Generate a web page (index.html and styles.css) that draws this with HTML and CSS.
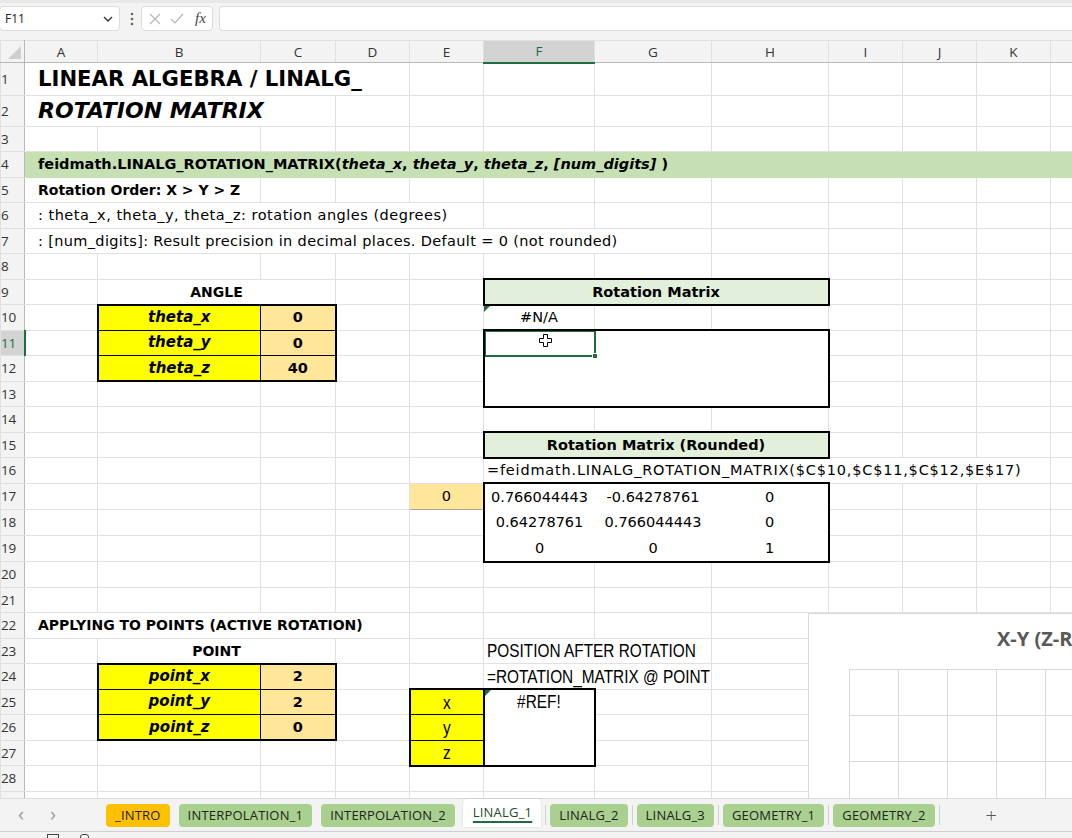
FILE: index.html
```html
<!DOCTYPE html>
<html lang="en">
<head>
  <meta charset="UTF-8" />
  <title>LINALG_1</title>
  <link rel="stylesheet" href="styles.css">
</head>
<body>
  <div class="app">
    <!-- name box + formula bar -->
    <div class="formula-bar">
      <div class="name-box">
        <span>F11</span>
        <svg width="10" height="6" viewBox="0 0 10 6"><path d="M1 1 L5 5 L9 1" fill="none" stroke="#333" stroke-width="1.4"/></svg>
      </div>
      <svg class="grip" width="4" height="14" viewBox="0 0 4 14"><circle cx="2" cy="2" r="1.3"/><circle cx="2" cy="7" r="1.3"/><circle cx="2" cy="12" r="1.3"/></svg>
      <div class="fx-box">
        <svg width="12" height="12" viewBox="0 0 12 12"><path d="M1 1 L11 11 M11 1 L1 11" stroke="#b5b5b5" stroke-width="1.2"/></svg>
        <svg width="14" height="11" viewBox="0 0 14 11"><path d="M1 6 L5 10 L13 1" fill="none" stroke="#b5b5b5" stroke-width="1.2"/></svg>
        <span class="fx">fx</span>
      </div>
      <div class="formula-input"></div>
    </div>

    <div class="sheet-wrap">
      <table class="sheet">
        <colgroup>
          <col class="c-rh"><col class="c-a"><col class="c-b"><col class="c-c"><col class="c-d"><col class="c-e">
          <col class="c-f"><col class="c-g"><col class="c-h"><col class="c-i"><col class="c-j"><col class="c-k"><col class="c-l">
        </colgroup>
        <thead>
          <tr>
            <th class="corner"><span class="corner-tri"></span></th>
            <th>A</th><th>B</th><th>C</th><th>D</th><th>E</th><th class="sel-col">F</th><th>G</th><th>H</th><th>I</th><th>J</th><th>K</th><th></th>
          </tr>
        </thead>
        <tbody>
          <tr class="r-title">
            <th>1</th>
            <td colspan="4" class="title">LINEAR ALGEBRA / LINALG_</td>
            <td></td><td></td><td></td><td></td><td></td><td></td><td></td><td></td>
          </tr>
          <tr class="r-sub">
            <th>2</th>
            <td colspan="3" class="title italic">ROTATION MATRIX</td>
            <td></td><td></td><td></td><td></td><td></td><td></td><td></td><td></td><td></td>
          </tr>
          <tr><th>3</th><td></td><td></td><td></td><td></td><td></td><td></td><td></td><td></td><td></td><td></td><td></td><td></td></tr>
          <tr>
            <th>4</th>
            <td colspan="12" class="fn-band">feidmath.LINALG_ROTATION_MATRIX(<i>theta_x</i>, <i>theta_y</i>, <i>theta_z</i>, <i>[num_digits]</i> )</td>
          </tr>
          <tr>
            <th>5</th>
            <td colspan="2" class="txt bold">Rotation Order: X &gt; Y &gt; Z</td>
            <td></td><td></td><td></td><td></td><td></td><td></td><td></td><td></td><td></td><td></td>
          </tr>
          <tr>
            <th>6</th>
            <td colspan="5" class="txt note">: theta_x, theta_y, theta_z: rotation angles (degrees)</td>
            <td></td><td></td><td></td><td></td><td></td><td></td><td></td>
          </tr>
          <tr>
            <th>7</th>
            <td colspan="7" class="txt note tight">: [num_digits]: Result precision in decimal places. Default = 0 (not rounded)</td>
            <td></td><td></td><td></td><td></td><td></td>
          </tr>
          <tr><th>8</th><td></td><td></td><td></td><td></td><td></td><td></td><td></td><td></td><td></td><td></td><td></td><td></td></tr>
          <tr>
            <th>9</th>
            <td></td>
            <td colspan="2" class="center bold">ANGLE</td>
            <td></td><td></td>
            <td colspan="3" class="box-head">Rotation Matrix</td>
            <td></td><td></td><td></td><td></td>
          </tr>
          <tr>
            <th>10</th>
            <td></td>
            <td class="key top left">theta_x</td>
            <td class="val top right">0</td>
            <td></td><td></td>
            <td class="center flag">#N/A</td>
            <td></td><td></td><td></td><td></td><td></td><td></td>
          </tr>
          <tr>
            <th class="sel-row">11</th>
            <td></td>
            <td class="key left">theta_y</td>
            <td class="val right">0</td>
            <td></td><td></td>
            <td colspan="3" rowspan="3" class="box">
              <div class="active-cell">
                <svg class="cursor" width="15" height="15" viewBox="0 0 15 15"><path d="M5.5 1.5 H9.5 V5.5 H13.5 V9.5 H9.5 V13.5 H5.5 V9.5 H1.5 V5.5 H5.5 Z" fill="#fff" stroke="#000" stroke-width="1"/></svg>
                <span class="fill-handle"></span>
              </div>
            </td>
            <td></td><td></td><td></td><td></td>
          </tr>
          <tr>
            <th>12</th>
            <td></td>
            <td class="key left bottom">theta_z</td>
            <td class="val right bottom">40</td>
            <td></td><td></td>
            <td></td><td></td><td></td><td></td>
          </tr>
          <tr><th>13</th><td></td><td></td><td></td><td></td><td></td><td></td><td></td><td></td><td></td></tr>
          <tr><th>14</th><td></td><td></td><td></td><td></td><td></td><td></td><td></td><td></td><td></td><td></td><td></td><td></td></tr>
          <tr>
            <th>15</th>
            <td></td><td></td><td></td><td></td><td></td>
            <td colspan="3" class="box-head">Rotation Matrix (Rounded)</td>
            <td></td><td></td><td></td><td></td>
          </tr>
          <tr>
            <th>16</th>
            <td></td><td></td><td></td><td></td><td></td>
            <td colspan="6" class="txt formula">=feidmath.LINALG_ROTATION_MATRIX($C$10,$C$11,$C$12,$E$17)</td>
            <td></td>
          </tr>
          <tr>
            <th>17</th>
            <td></td><td></td><td></td><td></td>
            <td class="digits">0</td>
            <td colspan="3" rowspan="3" class="box">
              <div class="matrix">
                <span>0.766044443</span><span>-0.64278761</span><span>0</span>
                <span>0.64278761</span><span>0.766044443</span><span>0</span>
                <span>0</span><span>0</span><span>1</span>
              </div>
            </td>
            <td></td><td></td><td></td><td></td>
          </tr>
          <tr><th>18</th><td></td><td></td><td></td><td></td><td></td><td></td><td></td><td></td><td></td></tr>
          <tr><th>19</th><td></td><td></td><td></td><td></td><td></td><td></td><td></td><td></td><td></td></tr>
          <tr><th>20</th><td></td><td></td><td></td><td></td><td></td><td></td><td></td><td></td><td></td><td></td><td></td><td></td></tr>
          <tr><th>21</th><td></td><td></td><td></td><td></td><td></td><td></td><td></td><td></td><td></td><td></td><td></td><td></td></tr>
          <tr>
            <th>22</th>
            <td colspan="4" class="txt bold">APPLYING TO POINTS (ACTIVE ROTATION)</td>
            <td></td><td></td><td></td><td></td><td></td><td></td><td></td><td></td>
          </tr>
          <tr>
            <th>23</th>
            <td></td>
            <td colspan="2" class="center bold">POINT</td>
            <td></td><td></td>
            <td colspan="2" class="narrow"><span>POSITION AFTER ROTATION</span></td>
            <td></td><td></td><td></td><td></td><td></td>
          </tr>
          <tr>
            <th>24</th>
            <td></td>
            <td class="key top left">point_x</td>
            <td class="val top right">2</td>
            <td></td><td></td>
            <td colspan="2" class="narrow"><span>=ROTATION_MATRIX @ POINT</span></td>
            <td></td><td></td><td></td><td></td><td></td>
          </tr>
          <tr>
            <th>25</th>
            <td></td>
            <td class="key left">point_y</td>
            <td class="val right">2</td>
            <td></td>
            <td class="axis top left"><span>x</span></td>
            <td rowspan="3" class="box result flag"><span>#REF!</span></td>
            <td></td><td></td><td></td><td></td><td></td><td></td>
          </tr>
          <tr>
            <th>26</th>
            <td></td>
            <td class="key left bottom">point_z</td>
            <td class="val right bottom">0</td>
            <td></td>
            <td class="axis left"><span>y</span></td>
            <td></td><td></td><td></td><td></td><td></td><td></td>
          </tr>
          <tr>
            <th>27</th>
            <td></td><td></td><td></td><td></td>
            <td class="axis left bottom"><span>z</span></td>
            <td></td><td></td><td></td><td></td><td></td><td></td>
          </tr>
          <tr><th>28</th><td></td><td></td><td></td><td></td><td></td><td></td><td></td><td></td><td></td><td></td><td></td><td></td></tr>
          <tr><th>29</th><td></td><td></td><td></td><td></td><td></td><td></td><td></td><td></td><td></td><td></td><td></td><td></td></tr>
        </tbody>
      </table>

      <!-- embedded scatter chart, floats over the cells -->
      <div class="chart">
        <div class="chart-title">X-Y (Z-Rotation)</div>
        <div class="plot"></div>
      </div>
    </div>

    <!-- sheet tabs -->
    <div class="tab-bar">
      <span class="nav">&lsaquo;</span>
      <span class="nav">&rsaquo;</span>
      <div class="tabs">
        <span class="tab intro">_INTRO</span>
        <span class="tab">INTERPOLATION_1</span>
        <span class="tab">INTERPOLATION_2</span>
        <span class="tab current">LINALG_1</span>
        <span class="sep"></span>
        <span class="tab">LINALG_2</span>
        <span class="sep"></span>
        <span class="tab">LINALG_3</span>
        <span class="sep"></span>
        <span class="tab">GEOMETRY_1</span>
        <span class="sep"></span>
        <span class="tab">GEOMETRY_2</span>
        <span class="sep"></span>
        <span class="add">+</span>
      </div>
    </div>
    <div class="status-bar">
      <span class="st-icon"></span>
      <span class="st-icon small"></span>
    </div>
  </div>
</body>
</html>
```

FILE: styles.css
```css
* {
  margin: 0;
  padding: 0;
  box-sizing: border-box;
}

body {
  background: #fff;
  font-family: "DejaVu Sans", sans-serif;
  color: #000;
  overflow: hidden;
}

.app {
  width: 1072px;
  height: 838px;
  display: flex;
  flex-direction: column;
}

/* ---------- formula bar ---------- */
.formula-bar {
  height: 40px;
  flex: none;
  background: #f3f3f3;
  border-top: 3px solid #e8e8e8;
  display: flex;
  align-items: center;
  padding-bottom: 6px;
}

.name-box {
  width: 121px;
  height: 25px;
  background: #fff;
  border: 1px solid #dcdcdc;
  border-radius: 4px;
  display: flex;
  align-items: center;
  justify-content: space-between;
  padding: 0 6px 0 5px;
  font-family: "Open Sans", sans-serif;
  font-size: 12px;
  color: #222;
  margin-left: -1px;
}

.grip {
  fill: #56704f;
  margin: 0 7px 0 10px;
}

.fx-box {
  width: 72px;
  height: 25px;
  background: #fff;
  border: 1px solid #dcdcdc;
  border-radius: 4px;
  display: flex;
  align-items: center;
  gap: 9px;
  padding-left: 7px;
}

.fx {
  font-family: "Liberation Serif", serif;
  font-style: italic;
  font-size: 15px;
  color: #444;
  margin-left: 2px;
}

.formula-input {
  flex: 1;
  height: 25px;
  margin-left: 6px;
  background: #fff;
  border: 1px solid #dcdcdc;
  border-radius: 4px 0 0 4px;
  border-right: none;
}

/* ---------- grid ---------- */
.sheet-wrap {
  flex: 1;
  min-height: 0;
  position: relative;
  overflow: hidden;
}

.sheet {
  border-collapse: collapse;
  table-layout: fixed;
  width: 1072px;
  font-size: 14.5px;
}

.c-rh { width: 24px; }
.c-a { width: 73px; }
.c-b { width: 163px; }
.c-c { width: 75px; }
.c-d { width: 74px; }
.c-e { width: 74px; }
.c-f { width: 111px; }
.c-g { width: 117px; }
.c-h { width: 117px; }
.c-i { width: 74px; }
.c-j { width: 74px; }
.c-k { width: 74px; }
.c-l { width: 22px; }

.sheet td {
  border: 1px solid #e1e1e1;
  padding: 0 4px;
  white-space: nowrap;
  overflow: hidden;
  vertical-align: middle;
  line-height: 1;
}

.sheet tbody tr { height: 25.5px; }
.sheet tbody tr.r-title { height: 32.5px; }
.sheet tbody tr.r-sub { height: 31px; }

.sheet thead th {
  height: 22px;
  background: #f3f3f3;
  border: 1px solid #e0e0e0;
  border-bottom: 1px solid #b8b8b8;
  font-family: "Open Sans", sans-serif;
  font-weight: 400;
  font-size: 13.5px;
  color: #333;
}

.sheet thead th.sel-col {
  background: #d3d3d3;
  border-bottom: 2px solid #1e6c41;
  color: #1e6c41;
}

.sheet thead th.corner {
  position: relative;
  border-right: 1px solid #b8b8b8;
}

.corner-tri {
  position: absolute;
  right: 3px;
  bottom: 3px;
  width: 0;
  height: 0;
  border-left: 13px solid transparent;
  border-bottom: 13px solid #cfcfcf;
}

.sheet tbody th {
  background: #f3f3f3;
  border: 1px solid #e0e0e0;
  border-right: 1px solid #b8b8b8;
  font-family: "Open Sans", sans-serif;
  font-weight: 400;
  font-size: 13.5px;
  color: #333;
  text-align: left;
  padding-left: 0;
  letter-spacing: -0.3px;
  white-space: nowrap;
  overflow: hidden;
}

.sheet tbody th.sel-row {
  background: #d3d3d3;
  border-right: 2px solid #1e6c41;
  color: #1e6c41;
}

/* ---------- cell content ---------- */
.title {
  font-size: 22px;
  font-weight: 700;
  padding-left: 13px !important;
}

.r-title .title {
  font-size: 21.2px;
}

.italic { font-style: italic; }
.bold {
  font-weight: 700;
  font-size: 14px;
}
.center { text-align: center; }

.txt { padding-left: 13px !important; }

.note { letter-spacing: 0.5px; }
.note.tight { letter-spacing: 0.35px; }

.formula {
  padding-left: 3px !important;
  letter-spacing: 0.8px;
}

.fn-band {
  background: #c6e0b4;
  font-weight: 700;
  padding-left: 13px !important;
  border-color: #c6e0b4 !important;
}

/* narrow-font cells (Arial Narrow look) */
.narrow span,
.axis span,
.result span {
  display: inline-block;
  font-family: "Liberation Sans", sans-serif;
  font-size: 19px;
  transform: scaleX(0.81);
}

.sheet td.narrow {
  padding-left: 3px;
}

.narrow span {
  transform-origin: 0 50%;
}

.sheet td.box-head {
  background: #e2efda;
  border: 2px solid #000;
  text-align: center;
  font-weight: 700;
}

.sheet td.box {
  border: 2px solid #000;
  padding: 0;
  position: relative;
  vertical-align: top;
}

.sheet td.key {
  background: #ffff00;
  border: 1px solid #000;
  text-align: center;
  font-weight: 700;
  font-style: italic;
  font-size: 15px;
}

.sheet td.val {
  background: #ffe699;
  border: 1px solid #000;
  text-align: center;
  font-weight: 700;
}

.sheet td.axis {
  background: #ffff00;
  border: 1px solid #000;
  border-right: 2px solid #000;
  text-align: center;
}

.sheet td.top { border-top: 2px solid #000; }
.sheet td.bottom { border-bottom: 2px solid #000; }
.sheet td.left { border-left: 2px solid #000; }
.sheet td.right { border-right: 2px solid #000; }

.sheet td.digits {
  background: #ffe699;
  border: 1px solid #a6a6a6;
  text-align: center;
}

/* little green error marker */
.flag { position: relative; }
.flag::before {
  content: "";
  position: absolute;
  left: 0;
  top: 0;
  border-top: 6px solid #1e6c41;
  border-right: 6px solid transparent;
}

.sheet td.result {
  text-align: center;
  padding-top: 2px;
}

.active-cell {
  position: absolute;
  left: -1px;
  top: -1px;
  width: 112px;
  height: 27px;
  border: 2px solid #1e6c41;
}

.cursor {
  position: absolute;
  left: 52px;
  top: 1px;
}

.fill-handle {
  position: absolute;
  right: -4px;
  bottom: -4px;
  width: 6px;
  height: 6px;
  background: #1e6c41;
  border: 1px solid #fff;
}

.matrix {
  display: grid;
  grid-template-columns: 110px 117px 116px;
  grid-auto-rows: 25.5px;
  align-items: center;
  text-align: center;
}

/* ---------- chart ---------- */
.chart {
  position: absolute;
  left: 808px;
  top: 573px;
  width: 420px;
  height: 320px;
  background: #fff;
  border: 1px solid #d9d9d9;
}

.chart-title {
  padding: 11px 0 0 188px;
  font-family: "Open Sans", sans-serif;
  font-weight: 700;
  font-size: 20px;
  color: #595959;
  white-space: nowrap;
}

.plot {
  position: absolute;
  left: 40px;
  top: 55px;
  width: 400px;
  height: 300px;
  border-left: 1px solid #d9d9d9;
  border-top: 1px solid #d9d9d9;
  background-image:
    linear-gradient(to right, #d9d9d9 1px, transparent 1px),
    linear-gradient(to bottom, #d9d9d9 1px, transparent 1px);
  background-size: 49px 46px;
  background-position: -1px -1px;
}

/* ---------- sheet tabs ---------- */
.tab-bar {
  height: 34px;
  flex: none;
  background: #f3f3f3;
  border-top: 1px solid #dadada;
  border-bottom: 1px solid #d0d0d0;
  display: flex;
  align-items: center;
  font-family: "Open Sans", sans-serif;
  font-size: 13px;
  color: #222;
}

.nav {
  width: 32px;
  text-align: center;
  font-size: 20px;
  color: #9a9a9a;
  margin-top: -3px;
}
.nav:first-child { margin-left: 5px; }

.tabs {
  display: flex;
  align-items: center;
  margin-left: 37px;
  letter-spacing: 0.2px;
}

.tab {
  background: #a9d08e;
  border-radius: 4px;
  padding: 3px 9px;
  margin-right: 9px;
  line-height: 17px;
}

.tab.intro { background: #ffc000; }

.tab.current {
  background: #fff;
  margin: -5px 9px 0 -1px;
  padding: 5px 9px 6px 10px;
  border-radius: 4px 4px 0 0;
  box-shadow: 0 0 2px rgba(0,0,0,0.15);
  text-decoration: underline;
  text-decoration-color: #1e6c41;
  text-decoration-thickness: 2px;
  text-underline-offset: 4px;
  color: #1e4a2e;
}

.sep {
  width: 1px;
  height: 20px;
  background: #d0d0d0;
  margin-right: 4px;
}

.tab + .sep { margin-left: -5px; }

.add {
  margin-left: 42px;
  font-size: 20px;
  color: #555;
  font-weight: 300;
}

.status-bar {
  height: 6px;
  flex: none;
  background: #f3f3f3;
  position: relative;
}

.st-icon {
  position: absolute;
  left: 47px;
  top: 2px;
  width: 12px;
  height: 10px;
  border: 1px solid #444;
}
.st-icon.small {
  left: 80px;
  width: 9px;
  border-radius: 3px 3px 0 0;
}
```
